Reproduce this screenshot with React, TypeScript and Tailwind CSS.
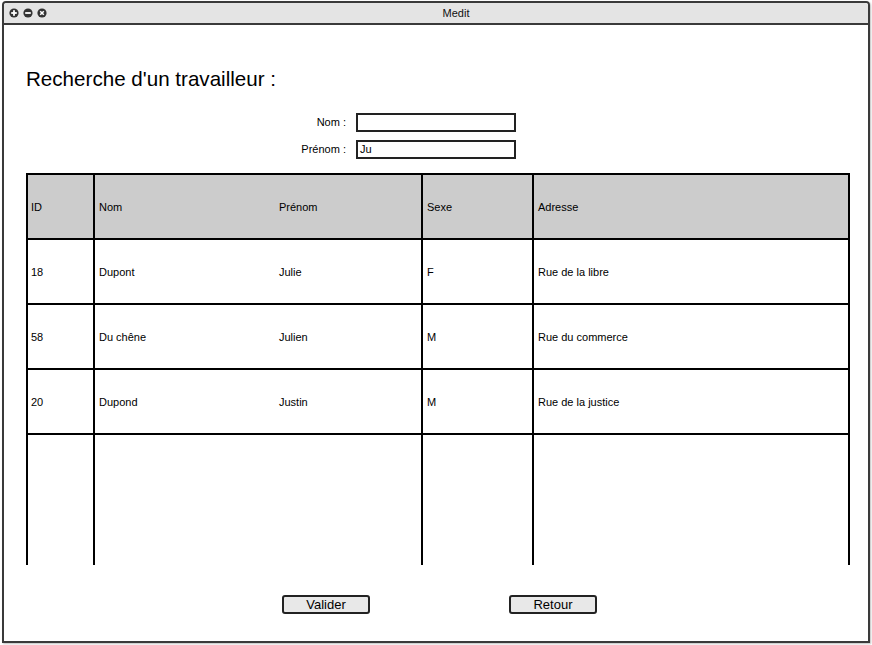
import React from "react";

const rows = [
  { id: "18", nom: "Dupont", prenom: "Julie", sexe: "F", adresse: "Rue de la libre" },
  { id: "58", nom: "Du chêne", prenom: "Julien", sexe: "M", adresse: "Rue du commerce" },
  { id: "20", nom: "Dupond", prenom: "Justin", sexe: "M", adresse: "Rue de la justice" },
];

function WinIcon({ kind }: { kind: "plus" | "minus" | "close" }) {
  return (
    <svg width="10" height="10" viewBox="0 0 10 10">
      <circle cx="5" cy="5" r="4.6" fill="#333" />
      {kind !== "close" && <rect x="2.2" y="4.1" width="5.6" height="1.8" fill="#fff" />}
      {kind === "plus" && <rect x="4.1" y="2.2" width="1.8" height="5.6" fill="#fff" />}
      {kind === "close" && (
        <path d="M3.2 3.2 L6.8 6.8 M6.8 3.2 L3.2 6.8" stroke="#fff" strokeWidth="1.5" />
      )}
    </svg>
  );
}

function Row({ cells, header, filler }: { cells: string[]; header?: boolean; filler?: boolean }) {
  return (
    <div
      className={`flex ${filler ? "h-[130px]" : "h-[65px] border-b-2 border-black"} ${
        header ? "bg-[#cccccc]" : "bg-white"
      }`}
    >
      <div className="w-[67px] border-r-2 border-black flex items-center pl-[3px] pt-[2px]">{cells[0]}</div>
      <div className="w-[328px] border-r-2 border-black flex items-center pl-[4px] pt-[2px]">
        <div className="w-[180px]">{cells[1]}</div>
        <div>{cells[2]}</div>
      </div>
      <div className="w-[111px] border-r-2 border-black flex items-center pl-[4px] pt-[2px]">{cells[3]}</div>
      <div className="flex-1 flex items-center pl-[4px] pt-[2px]">{cells[4]}</div>
    </div>
  );
}

export default function App() {
  return (
    <div className="w-[872px] h-[645px] bg-white pl-[2px] pt-[1px]" style={{ fontFamily: '"Liberation Sans", Arial, sans-serif' }}>
      <div className="w-[868px] h-[642px] border-2 border-[#3a3a3a] rounded-t-[4px] flex flex-col shadow-[1px_1px_2px_rgba(0,0,0,0.25)] text-black">
        {/* title bar */}
        <div className="relative h-[22px] bg-[#e4e4e4] border-b-2 border-[#3a3a3a] flex items-center rounded-t-[3px]">
          <div className="flex items-center gap-[4px] pl-[5px]">
            <WinIcon kind="plus" />
            <WinIcon kind="minus" />
            <WinIcon kind="close" />
          </div>
          <div className="absolute left-0 right-0 text-center text-[11px] text-[#111] pl-[40px]">Medit</div>
        </div>

        <div className="flex-1 flex flex-col pl-[22px] pr-[18px]">
          <h1 className="mt-[42px] text-[20.6px] leading-[23px]">Recherche d'un travailleur :</h1>

          <div className="mt-[23px] flex flex-col gap-[8px] text-[11px]">
            <div className="flex items-center">
              <div className="w-[330px] text-right pr-[10px]">Nom :</div>
              <div className="w-[160px] h-[19px] border-2 border-[#222] bg-white" />
            </div>
            <div className="flex items-center">
              <div className="w-[330px] text-right pr-[10px]">Prénom :</div>
              <div className="w-[160px] h-[19px] border-2 border-[#222] bg-white flex items-center pl-[2px] text-[11px]">Ju</div>
            </div>
          </div>

          <div className="mt-[14px] w-[824px] border-t-2 border-x-2 border-black text-[11px]">
            <Row header cells={["ID", "Nom", "Prénom", "Sexe", "Adresse"]} />
            {rows.map((r) => (
              <Row key={r.id} cells={[r.id, r.nom, r.prenom, r.sexe, r.adresse]} />
            ))}
            <Row filler cells={["", "", "", "", ""]} />
          </div>

          <div className="mt-[30px] flex text-[13px]">
            <button className="ml-[256px] w-[88px] h-[19px] bg-[#e8e8e8] border-2 border-[#222] rounded-[3px] leading-none">Valider</button>
            <button className="ml-[139px] w-[88px] h-[19px] bg-[#e8e8e8] border-2 border-[#222] rounded-[3px] leading-none">Retour</button>
          </div>
        </div>
      </div>
    </div>
  );
}
